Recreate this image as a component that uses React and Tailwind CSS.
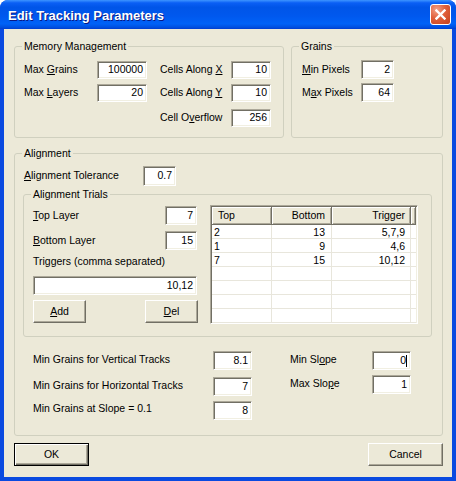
import React from 'react'

const field =
  'flex items-center justify-end bg-white pr-[3px] border border-t-[#aca899] border-l-[#aca899] border-b-white border-r-white shadow-[inset_1px_1px_0_#716f64,inset_-1px_-1px_0_#f1efe2]'

const btn =
  'flex items-center justify-center bg-[#ece9d8] border border-t-white border-l-white border-r-[#716f64] border-b-[#716f64] shadow-[inset_-1px_-1px_0_#aca899]'

function Field({ className, value, caret }) {
  return (
    <div className={`${field} ${className}`}>
      <span>{value}</span>
      {caret && <span className="w-px h-[12px] bg-black" />}
    </div>
  )
}

function Group({ title, className, children }) {
  return (
    <fieldset className={`border border-[#d0d0bf] rounded-[3px] ${className}`}>
      <legend className="ml-[7px] px-[2px] leading-[13px]">{title}</legend>
      {children}
    </fieldset>
  )
}

const rows = [
  ['2', '13', '5,7,9'],
  ['1', '9', '4,6'],
  ['7', '15', '10,12'],
  ['', '', ''],
  ['', '', ''],
  ['', '', ''],
  ['', '', ''],
]

function TrialList() {
  const head = 'h-[18px] flex items-center bg-[#ece9d8] border-r border-b border-r-[#716f64] border-b-[#716f64] shadow-[inset_1px_1px_0_#fff,inset_-1px_-1px_0_#aca899]'
  return (
    <div className="mt-[4px] w-[208px] h-[119px] bg-white border border-t-[#aca899] border-l-[#aca899] border-b-white border-r-white shadow-[inset_1px_1px_0_#716f64,inset_-1px_-1px_0_#f1efe2] p-[1px] overflow-hidden">
      <div className="flex">
        <div className={`${head} w-[60px] pl-[6px]`}>Top</div>
        <div className={`${head} w-[60px] justify-end pr-[6px]`}>Bottom</div>
        <div className={`${head} w-[79px] justify-end pr-[5px]`}>Trigger</div>
        <div className={`${head} flex-1`} />
      </div>
      {rows.map((r, i) => (
        <div key={i} className="flex h-[14px] border-b border-[#e8e6dc]">
          <div className="w-[60px] pl-[2px] leading-[14px] border-r border-[#e8e6dc]">{r[0]}</div>
          <div className="w-[60px] pr-[6px] text-right leading-[14px] border-r border-[#e8e6dc]">{r[1]}</div>
          <div className="w-[79px] pr-[5px] text-right leading-[14px] border-r border-[#e8e6dc]">{r[2]}</div>
        </div>
      ))}
    </div>
  )
}

export default function App() {
  return (
    <div className="w-[456px] h-[481px] flex flex-col rounded-t-[8px] overflow-hidden bg-[#0a4ae0] text-black text-[10.5px] font-['Liberation_Sans',Arial,sans-serif]">
      <div className="h-[29px] shrink-0 flex items-center pl-[8px] pr-[5px] bg-[linear-gradient(to_bottom,#3d95ff_0%,#0a5ff5_10%,#0055e8_25%,#0058ee_55%,#0062f7_82%,#0050e0_94%,#003dd0_100%)]">
        <span className="pt-[3px] text-white font-bold text-[13px] [text-shadow:1px_1px_0_#0a1883]">
          Edit Tracking Parameters
        </span>
        <div className="ml-auto w-[21px] h-[21px] rounded-[3px] border border-white bg-[radial-gradient(circle_at_30%_25%,#f3a188_0%,#e0603b_45%,#c6401c_100%)] flex items-center justify-center">
          <svg width="11" height="11" viewBox="0 0 11 11">
            <path d="M1.5 1.5 L9.5 9.5 M9.5 1.5 L1.5 9.5" stroke="#fff" strokeWidth="2.4" strokeLinecap="square" />
          </svg>
        </div>
      </div>

      <div className="flex-1 mx-[4px] mb-[4px] bg-[#ece9d8] pl-[10px] pr-[9px] pt-[11px]">
        <div className="flex gap-[7px]">
          <Group title="Memory Management" className="w-[270px] h-[98px]">
            <div className="flex pl-[9px]">
              <div>
                <div className="mt-[8px] flex items-center">
                  <span className="w-[73px]">Max <u>G</u>rains</span>
                  <Field className="w-[50px] h-[18px]" value="100000" />
                </div>
                <div className="mt-[5px] flex items-center">
                  <span className="w-[73px]">Max <u>L</u>ayers</span>
                  <Field className="w-[50px] h-[18px]" value="20" />
                </div>
              </div>
              <div className="ml-[13px]">
                <div className="mt-[8px] flex items-center">
                  <span className="w-[71px]">Cells Along <u>X</u></span>
                  <Field className="w-[40px] h-[18px]" value="10" />
                </div>
                <div className="mt-[5px] flex items-center">
                  <span className="w-[71px]">Cells Along <u>Y</u></span>
                  <Field className="w-[40px] h-[18px]" value="10" />
                </div>
                <div className="mt-[7px] flex items-center">
                  <span className="w-[71px]">Cell O<u>v</u>erflow</span>
                  <Field className="w-[40px] h-[18px]" value="256" />
                </div>
              </div>
            </div>
          </Group>
          <Group title="Grains" className="w-[152px] h-[98px]">
            <div className="pl-[10px]">
              <div className="mt-[7px] flex items-center">
                <span className="w-[59px]"><u>M</u>in Pixels</span>
                <Field className="w-[33px] h-[19px]" value="2" />
              </div>
              <div className="mt-[4px] flex items-center">
                <span className="w-[59px]">M<u>a</u>x Pixels</span>
                <Field className="w-[33px] h-[19px]" value="64" />
              </div>
            </div>
          </Group>
        </div>

        <Group title="Alignment" className="mt-[9px] h-[289px]">
          <div className="mt-[6px] pl-[9px] flex items-center">
            <span className="w-[119px]"><u>A</u>lignment Tolerance</span>
            <Field className="w-[33px] h-[20px]" value="0.7" />
          </div>

          <Group title="Alignment Trials" className="mt-[2px] ml-[8px] mr-[10px] h-[149px]">
            <div className="flex pl-[9px]">
              <div className="w-[165px]">
                <div className="mt-[5px] flex items-center">
                  <span className="w-[132px]"><u>T</u>op Layer</span>
                  <Field className="w-[32px] h-[19px]" value="7" />
                </div>
                <div className="mt-[6px] flex items-center">
                  <span className="w-[132px]"><u>B</u>ottom Layer</span>
                  <Field className="w-[32px] h-[19px]" value="15" />
                </div>
                <div className="mt-[5px] leading-[13px]">Triggers (comma separated)</div>
                <Field className="mt-[8px] w-[164px] h-[19px]" value="10,12" />
                <div className="mt-[5px] flex justify-between">
                  <div className={`${btn} w-[53px] h-[23px]`}><span><u>A</u>dd</span></div>
                  <div className={`${btn} w-[53px] h-[23px]`}><span><u>D</u>el</span></div>
                </div>
              </div>
              <div className="ml-[12px]">
                <TrialList />
              </div>
            </div>
          </Group>

          <div className="flex pl-[18px]">
            <div>
              <div className="mt-[14px] flex items-center">
                <span className="w-[180px] -mt-[2px]">Min Grains for Vertical Tracks</span>
                <Field className="w-[39px] h-[19px]" value="8.1" />
              </div>
              <div className="mt-[7px] flex items-center">
                <span className="w-[180px] -mt-[2px]">Min Grains for Horizontal Tracks</span>
                <Field className="w-[39px] h-[19px]" value="7" />
              </div>
              <div className="mt-[5px] flex items-center">
                <span className="w-[180px] -mt-[3px]">Min Grains at Slope = 0.1</span>
                <Field className="w-[39px] h-[19px]" value="8" />
              </div>
            </div>
            <div className="ml-[38px]">
              <div className="mt-[14px] flex items-center">
                <span className="w-[82px] -mt-[2px]">Min Sl<u>o</u>pe</span>
                <Field className="w-[39px] h-[19px]" value="0" caret />
              </div>
              <div className="mt-[5px] flex items-center">
                <span className="w-[82px] -mt-[2px]">Max Slo<u>p</u>e</span>
                <Field className="w-[39px] h-[19px]" value="1" />
              </div>
            </div>
          </div>
        </Group>

        <div className="mt-[7px] flex justify-between">
          <div className="w-[75px] h-[23px] flex items-center justify-center bg-[#ece9d8] border border-black shadow-[inset_1px_1px_0_#fff,inset_-1px_-1px_0_#716f64,inset_-2px_-2px_0_#aca899]">
            OK
          </div>
          <div className={`${btn} w-[75px] h-[23px]`}>Cancel</div>
        </div>
      </div>
    </div>
  )
}
